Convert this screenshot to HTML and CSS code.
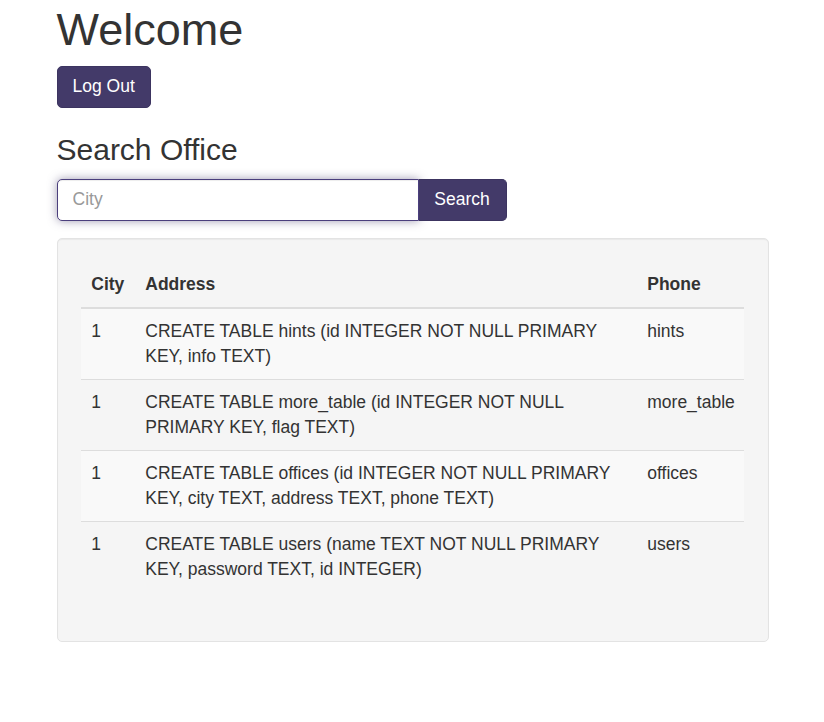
FILE: index.html
```html
<!DOCTYPE html>
<html>
<head>
<meta charset="utf-8">
<title>Welcome</title>
<link rel="stylesheet" href="styles.css">
</head>
<body>
<div class="container">
  <h1 class="title">Welcome</h1>
  <button class="btn">Log Out</button>
  <h3 class="subtitle">Search Office</h3>
  <div class="input-group">
    <input class="form-control" type="text" placeholder="City">
    <button class="btn btn-attached">Search</button>
  </div>
  <div class="well">
    <table class="table">
      <colgroup>
        <col class="c-city">
        <col class="c-address">
        <col class="c-phone">
      </colgroup>
      <thead>
        <tr><th>City</th><th>Address</th><th>Phone</th></tr>
      </thead>
      <tbody>
        <tr><td>1</td><td>CREATE TABLE hints (id INTEGER NOT NULL PRIMARY KEY, info TEXT)</td><td>hints</td></tr>
        <tr><td>1</td><td>CREATE TABLE more_table (id INTEGER NOT NULL PRIMARY KEY, flag TEXT)</td><td>more_table</td></tr>
        <tr><td>1</td><td>CREATE TABLE offices (id INTEGER NOT NULL PRIMARY KEY, city TEXT, address TEXT, phone TEXT)</td><td>offices</td></tr>
        <tr><td>1</td><td>CREATE TABLE users (name TEXT NOT NULL PRIMARY KEY, password TEXT, id INTEGER)</td><td>users</td></tr>
      </tbody>
    </table>
  </div>
</div>
</body>
</html>
```
FILE: styles.css
```css
html, body {
  margin: 0;
  padding: 0;
  background: #fff;
}
body {
  font-family: "Liberation Sans", Arial, Helvetica, sans-serif;
  font-size: 17.5px;
  line-height: 25px;
  color: #333;
}
.container {
  width: 712px;
  margin: 0 auto;
  padding-top: 5px;
  padding-left: 1px;
}
.title {
  font-size: 45px;
  font-weight: 500;
  line-height: 49.5px;
  margin: 0 0 11px 0;
}
.btn {
  display: inline-block;
  font-family: inherit;
  font-size: 17.5px;
  line-height: 25px;
  color: #fff;
  background: #433a69;
  border: 1px solid #3c3460;
  border-radius: 5px;
  padding: 7.5px 15px;
  height: 42px;
  margin: 0;
  cursor: pointer;
}
.subtitle {
  font-size: 30px;
  font-weight: 500;
  line-height: 33px;
  margin: 25px 0 13px 0;
}
.input-group {
  display: flex;
  width: 450px;
  margin-bottom: 17px;
}
.form-control {
  flex: 1;
  min-width: 0;
  height: 42px;
  box-sizing: border-box;
  font-family: inherit;
  font-size: 17.5px;
  padding: 7.5px 15px;
  color: #555;
  background: #fff;
  border: 1px solid #4b3f7d;
  border-radius: 5px 0 0 5px;
  box-shadow: inset 0 1px 1px rgba(0,0,0,0.075), 0 0 10px rgba(67,58,105,0.5);
  outline: none;
  margin: 0;
}
.form-control::placeholder {
  color: #999;
}
.btn-attached {
  height: 42px;
  width: 88px;
  padding: 7.5px 0;
  border-radius: 0 5px 5px 0;
  border-left: 0;
}
.well {
  background: #f5f5f5;
  border: 1px solid #e3e3e3;
  border-radius: 5px;
  padding: 23.75px;
  box-shadow: inset 0 1px 1px rgba(0,0,0,0.05);
}
.table {
  width: 100%;
  border-collapse: collapse;
  border-spacing: 0;
  table-layout: fixed;
  margin-bottom: 25px;
}
.c-city { width: 54px; }
.c-address { width: 502px; }
.c-phone { width: 107px; }
.table th,
.table td {
  padding: 10px;
  text-align: left;
  vertical-align: top;
  line-height: 25px;
}
.table th {
  font-weight: bold;
  vertical-align: bottom;
  border-bottom: 2.5px solid #ddd;
}
.table td {
  border-top: 1.25px solid #ddd;
}
.table tbody tr:first-child td {
  border-top: 0;
}
.table tbody tr:nth-child(odd) {
  background: #f9f9f9;
}
```
